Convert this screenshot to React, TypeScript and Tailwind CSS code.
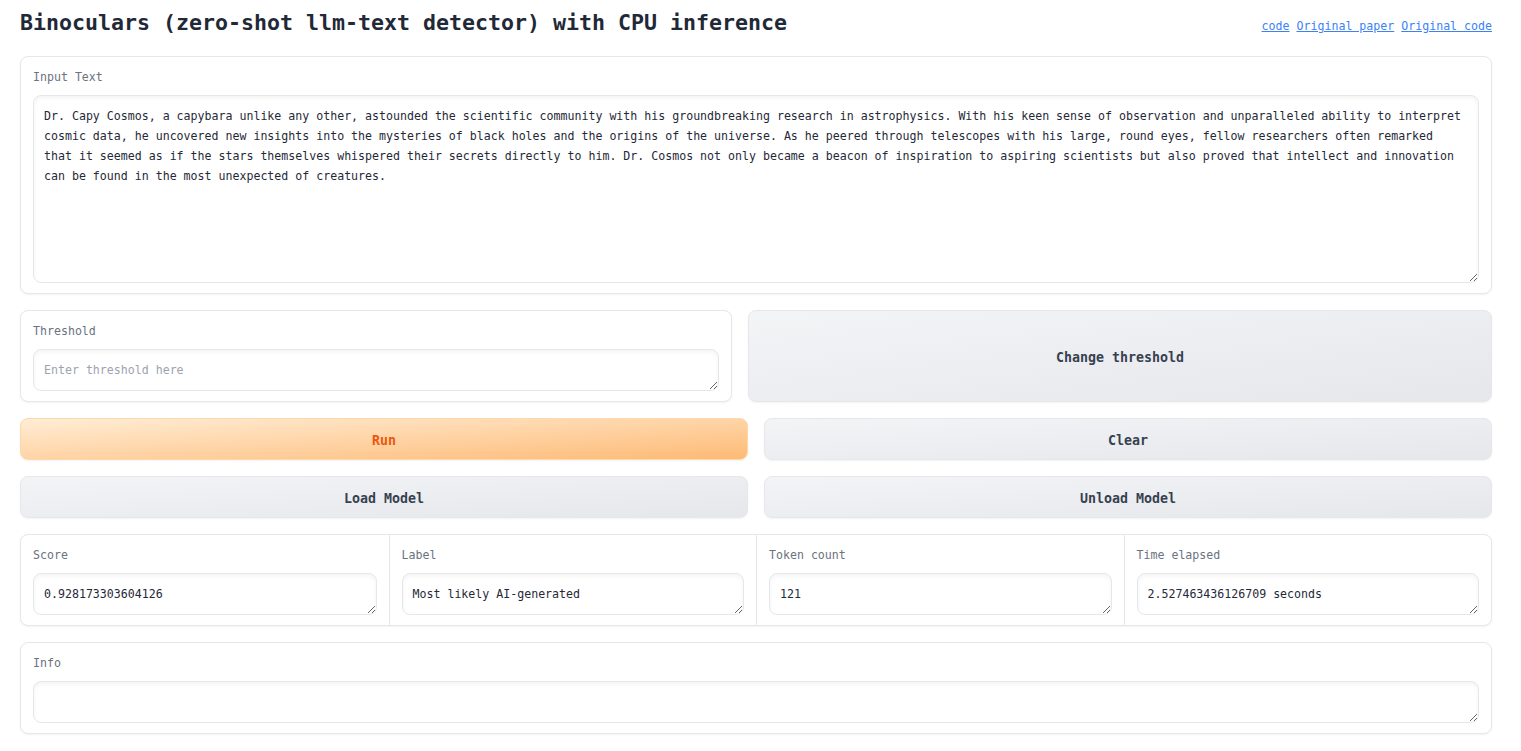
import React from "react";

const inputText =
  "Dr. Capy Cosmos, a capybara unlike any other, astounded the scientific community with his groundbreaking research in astrophysics. With his keen sense of observation and unparalleled ability to interpret\n" +
  "cosmic data, he uncovered new insights into the mysteries of black holes and the origins of the universe. As he peered through telescopes with his large, round eyes, fellow researchers often remarked\n" +
  "that it seemed as if the stars themselves whispered their secrets directly to him. Dr. Cosmos not only became a beacon of inspiration to aspiring scientists but also proved that intellect and innovation\n" +
  "can be found in the most unexpected of creatures.";

const taCls =
  "block w-full rounded-[8px] border border-[#e5e7eb] bg-white p-[10px] text-[11.6px] leading-[20px] text-[#1f2937] shadow-[inset_0_2px_4px_rgba(0,0,0,0.05)] outline-none placeholder:text-[#9ca3af] font-['DejaVu_Sans_Mono','Liberation_Mono',monospace]";

const blockCls =
  "rounded-[8px] border border-[#e5e7eb] bg-white shadow-[0_1px_2px_rgba(0,0,0,0.05)]";

const labelCls = "block mb-[8px] text-[11.6px] leading-[20px] text-[#6b7280]";

const secBtn =
  "flex items-center justify-center pt-[4px] rounded-[8px] border border-[#e5e7eb] bg-gradient-to-br from-[#f3f4f6] to-[#e5e7eb] text-[13.3px] font-semibold text-[#374151] shadow-[0_1px_2px_rgba(0,0,0,0.05)] font-['DejaVu_Sans_Mono','Liberation_Mono',monospace]";

function Field({
  label,
  value,
  placeholder,
  className = "",
}: {
  label: string;
  value?: string;
  placeholder?: string;
  className?: string;
}) {
  return (
    <div className={className}>
      <span className={labelCls}>{label}</span>
      <textarea
        rows={1}
        defaultValue={value}
        placeholder={placeholder}
        className={taCls + " h-[42px] overflow-hidden"}
      />
    </div>
  );
}

export default function App() {
  return (
    <div className="min-h-[751px] bg-white pl-[20px] pr-[29px] font-['DejaVu_Sans_Mono','Liberation_Mono',monospace] text-[#1f2937]">
      <div className="flex h-[40px] items-start justify-between">
        <h1 className="pt-[9px] text-[21.6px] font-bold leading-[28px] text-[#1f2937]">
          Binoculars (zero-shot llm-text detector) with CPU inference
        </h1>
        <div className="flex gap-[7px] pt-[16px] text-[11.6px] leading-[20px] text-[#3b82f6]">
          <a href="#" className="underline">code</a>
          <a href="#" className="underline">Original paper</a>
          <a href="#" className="underline">Original code</a>
        </div>
      </div>

      <div className="mt-[16px] flex flex-col gap-[16px]">
        <div className={blockCls + " px-[12px] pt-[10px] pb-[10px]"}>
          <span className={labelCls}>Input Text</span>
          <textarea
            defaultValue={inputText}
            wrap="off"
            className={taCls + " h-[188px] overflow-hidden whitespace-pre"}
          />
        </div>

        <div className="flex gap-[16px]">
          <div className={blockCls + " w-[712px] shrink-0 px-[12px] pt-[10px] pb-[10px]"}>
            <Field label="Threshold" placeholder="Enter threshold here" />
          </div>
          <button className={secBtn + " flex-1"}>Change threshold</button>
        </div>

        <div className="grid grid-cols-2 gap-[16px]">
          <button className="flex h-[42px] items-center justify-center pt-[4px] rounded-[8px] border border-[#fed7aa] bg-gradient-to-br from-[#ffedd5] to-[#fdba74] text-[13.3px] font-semibold text-[#ea580c] shadow-[0_1px_2px_rgba(0,0,0,0.05)]">
            Run
          </button>
          <button className={secBtn + " h-[42px]"}>Clear</button>
        </div>

        <div className="grid grid-cols-2 gap-[16px]">
          <button className={secBtn + " h-[42px]"}>Load Model</button>
          <button className={secBtn + " h-[42px]"}>Unload Model</button>
        </div>

        <div className={blockCls + " grid grid-cols-4"}>
          <Field className="px-[12px] pt-[10px] pb-[10px]" label="Score" value="0.928173303604126" />
          <Field className="border-l border-[#e5e7eb] px-[12px] pt-[10px] pb-[10px]" label="Label" value="Most likely AI-generated" />
          <Field className="border-l border-[#e5e7eb] px-[12px] pt-[10px] pb-[10px]" label="Token count" value="121" />
          <Field className="border-l border-[#e5e7eb] px-[12px] pt-[10px] pb-[10px]" label="Time elapsed" value="2.527463436126709 seconds" />
        </div>

        <div className={blockCls + " px-[12px] pt-[10px] pb-[10px]"}>
          <Field label="Info" value="" />
        </div>
      </div>
    </div>
  );
}
